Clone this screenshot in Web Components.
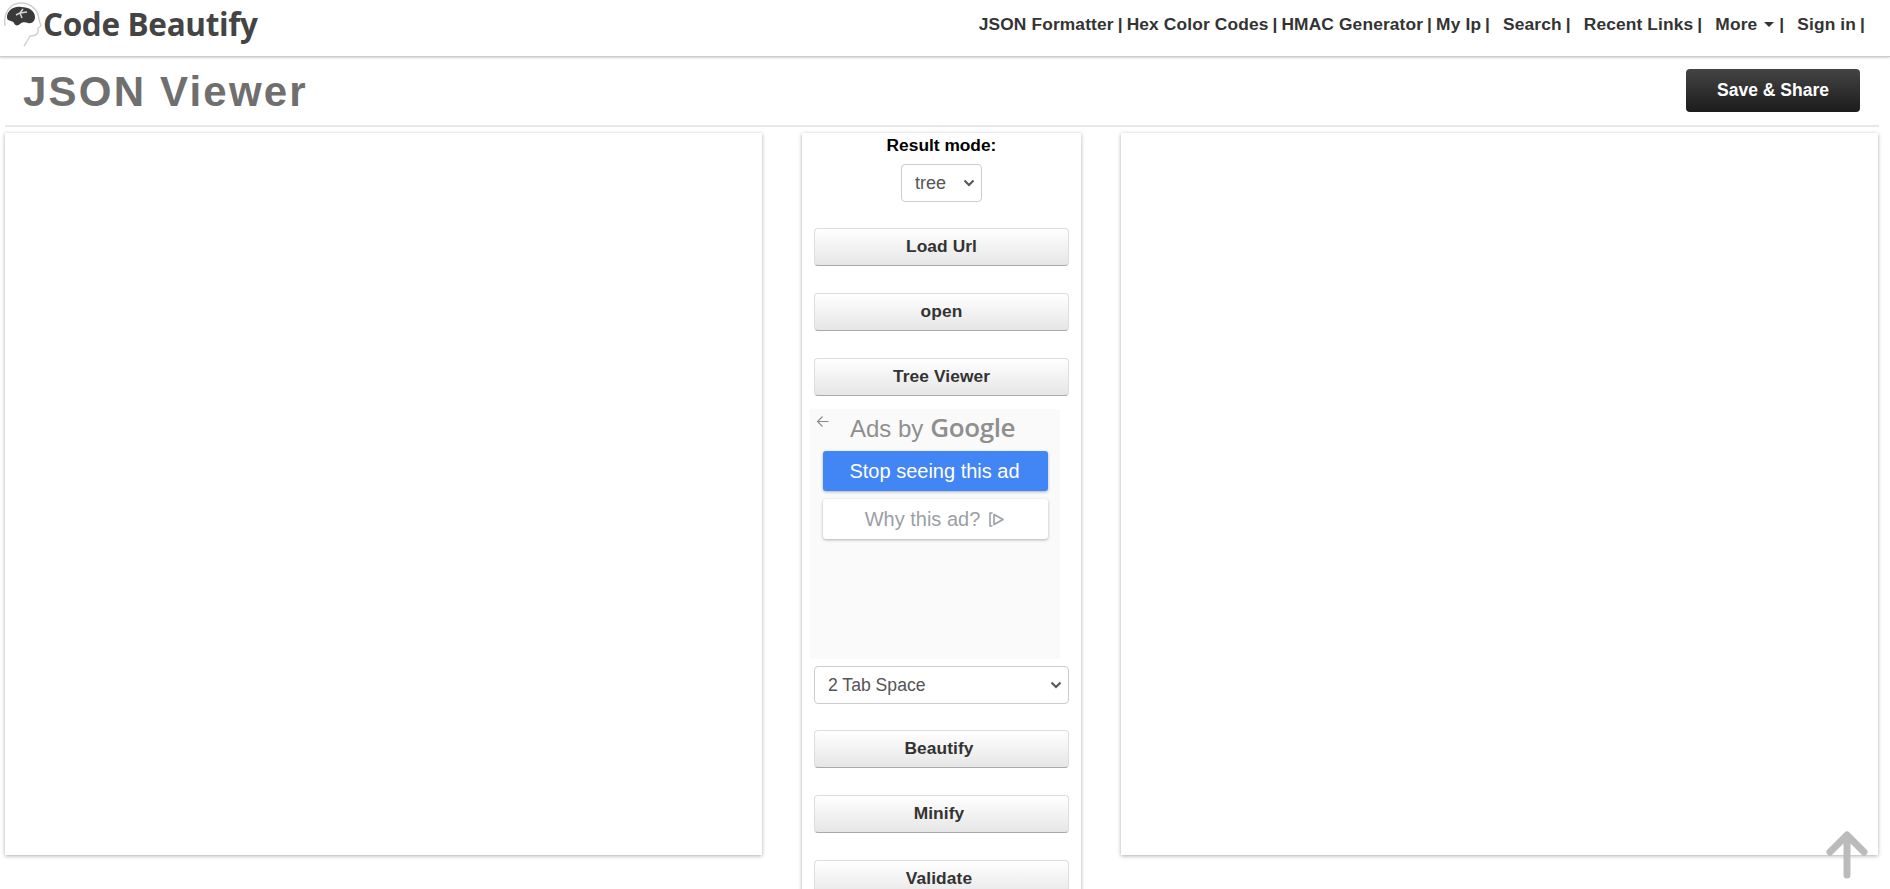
<!DOCTYPE html>
<html lang="en">
<head>
<meta charset="utf-8">
<title>JSON Viewer</title>
<style>
    html, body {
        margin: 0;
        height: 889px;
        overflow: hidden;
        background: #fff;
        font-family: "Liberation Sans", Arial, sans-serif;
    }
</style>
</head>
<body>
<code-header>
    <nav-item>JSON Formatter</nav-item>
    <nav-item>Hex Color Codes</nav-item>
    <nav-item>HMAC Generator</nav-item>
    <nav-item wide>My Ip</nav-item>
    <nav-item wide>Search</nav-item>
    <nav-item wide>Recent Links</nav-item>
    <nav-item wide caret>More</nav-item>
    <nav-item>Sign in</nav-item>
</code-header>
<title-bar heading="JSON Viewer"></title-bar>
<viewer-layout>
    <white-panel slot="left"></white-panel>
    <tool-column slot="middle">
        <mode-select></mode-select>
        <tool-button>Load Url</tool-button>
        <tool-button>open</tool-button>
        <tool-button>Tree Viewer</tool-button>
        <ad-box></ad-box>
        <tab-select></tab-select>
        <tool-button shifted>Beautify</tool-button>
        <tool-button shifted>Minify</tool-button>
        <tool-button shifted>Validate</tool-button>
    </tool-column>
    <white-panel slot="right"></white-panel>
</viewer-layout>
<scroll-top></scroll-top>

<script>
class CodeHeader extends HTMLElement {
    constructor() {
        super()
        this.attachShadow({ mode: "open" })
        this.shadowRoot.innerHTML = `
            <style>
                :host {
                    display: flex;
                    align-items: center;
                    justify-content: space-between;
                    height: 56px;
                    border-bottom: 1px solid #ccc;
                    box-shadow: 0 1px 2px rgba(0, 0, 0, .18);
                }
                .logo {
                    display: flex;
                    align-items: flex-start;
                    height: 56px;
                }
                svg {
                    display: block;
                    width: 43px;
                    height: 48px;
                }
                .name {
                    margin: 2px 0 0 0;
                    font: 700 31.5px "Open Sans", sans-serif;
                    letter-spacing: -.35px;
                    color: #444;
                }
                nav {
                    display: flex;
                    padding: 0 21px 0 0;
                    margin-top: -8px;
                }
            </style>
            <div class="logo">
                <svg viewBox="0 0 43 48">
                    <path d="M5 26C3 13 10 3 21 3C31 3 38 10 39 19C39 22 41 24 41 26L38 28L38 32C37 36 33 36 30 36C28 40 26 43 24 46"
                        fill="none" stroke="#cfcfcf" stroke-width="1.4"/>
                    <path d="M7 16C8 10 14 6 21 7C29 7 35 11 35 17C35 21 32 24 28 23C25 22 22 22 20 24C18 26 15 26 14 23C13 21 10 21 8 20C7 19 7 18 7 16Z" fill="#3a3a3a"/>
                    <path d="M16 15L20 13L23 9M20 13L27 12M20 13L22 18" fill="none" stroke="#d8d8d8" stroke-width="1.5"/>
                </svg>
                <span class="name">Code Beautify</span>
            </div>
            <nav><slot></slot></nav>
        `
    }
}

class NavItem extends HTMLElement {
    constructor() {
        super()
        this.attachShadow({ mode: "open" })
        const caret = this.hasAttribute("caret") ? `<i></i>` : ""
        this.shadowRoot.innerHTML = `<style>
                :host {
                    display: block;
                    font: 700 17.33px "Liberation Sans", sans-serif;
                    letter-spacing: .15px;
                    color: #333;
                    white-space: pre;
                }
                :host([wide]) {
                    margin-right: 9px;
                }
                span {
                    word-spacing: -1px;
                }
                i {
                    display: inline-block;
                    margin: 0 1px 3px 7px;
                    border: 5px solid transparent;
                    border-top-color: #333;
                    border-bottom: 0;
                }
            </style><slot></slot>${caret}<span> | </span>`
    }
}

class TitleBar extends HTMLElement {
    constructor() {
        super()
        this.attachShadow({ mode: "open" })
        this.shadowRoot.innerHTML = `
            <style>
                :host {
                    display: flex;
                    align-items: center;
                    justify-content: space-between;
                    height: 68px;
                    margin: 0 11px 0 5px;
                    padding: 0 19px 0 18px;
                    border-bottom: 2px solid #e8e8e8;
                }
                h1 {
                    margin: 2px 0 0;
                    font: 700 42px "Liberation Sans", sans-serif;
                    letter-spacing: 2.2px;
                    color: #6f6f6f;
                }
                button {
                    width: 174px;
                    height: 43px;
                    margin-top: -1px;
                    border: 0;
                    border-radius: 4px;
                    background: linear-gradient(#444, #1c1c1c);
                    color: #fff;
                    font: 700 17.5px "Liberation Sans", sans-serif;
                }
            </style>
            <h1>${this.getAttribute("heading")}</h1>
            <button>Save &amp; Share</button>
        `
    }
}

class ViewerLayout extends HTMLElement {
    constructor() {
        super()
        this.attachShadow({ mode: "open" })
        this.shadowRoot.innerHTML = `
            <style>
                :host {
                    display: grid;
                    grid-template-columns: 757px 279px 757px;
                    gap: 40px;
                    align-items: start;
                    padding: 6px 0 0 5px;
                }
            </style>
            <slot name="left"></slot>
            <slot name="middle"></slot>
            <slot name="right"></slot>
        `
    }
}

class WhitePanel extends HTMLElement {
    constructor() {
        super()
        this.attachShadow({ mode: "open" })
        this.shadowRoot.innerHTML = `
            <style>
                :host {
                    display: block;
                    height: 722px;
                    background: #fff;
                    box-shadow: 0 1px 4px rgba(0, 0, 0, .32);
                }
            </style>
        `
    }
}

class ToolColumn extends HTMLElement {
    constructor() {
        super()
        this.attachShadow({ mode: "open" })
        this.shadowRoot.innerHTML = `
            <style>
                :host {
                    display: flex;
                    flex-direction: column;
                    height: 860px;
                    padding: 0 12px;
                    box-sizing: border-box;
                    background: #fff;
                    box-shadow: 0 1px 4px rgba(0, 0, 0, .32);
                }
            </style>
            <slot></slot>
        `
    }
}

class ToolButton extends HTMLElement {
    constructor() {
        super()
        this.attachShadow({ mode: "open" })
        this.shadowRoot.innerHTML = `
            <style>
                :host {
                    display: block;
                    margin-bottom: 27px;
                }
                button {
                    display: block;
                    width: 100%;
                    height: 38px;
                    padding: 0 0 2px;
                    border: 1px solid #ddd;
                    border-bottom-color: #aaa;
                    border-radius: 4px;
                    background: linear-gradient(#fff, #e6e6e6);
                    color: #333;
                    font: 700 17.33px "Liberation Sans", sans-serif;
                    letter-spacing: .1px;
                }
                :host([shifted]) button {
                    padding-right: 5px;
                }
            </style>
            <button><slot></slot></button>
        `
    }
}

const selectStyle = `
    select {
        appearance: none;
        height: 38px;
        padding: 0 8px 0 13px;
        border: 1px solid #ccc;
        border-radius: 4px;
        background: #fff url("data:image/svg+xml,%3Csvg xmlns='http://www.w3.org/2000/svg' width='12' height='8'%3E%3Cpath d='M1.5 1.5L6 6L10.5 1.5' fill='none' stroke='%23555' stroke-width='2'/%3E%3C/svg%3E") no-repeat right 6px center;
        color: #555;
        font: 400 17.6px "Liberation Sans", sans-serif;
    }
`

class ModeSelect extends HTMLElement {
    constructor() {
        super()
        this.attachShadow({ mode: "open" })
        this.shadowRoot.innerHTML = `
            <style>
                :host {
                    display: flex;
                    flex-direction: column;
                    align-items: center;
                    margin-bottom: 26px;
                }
                label {
                    height: 31px;
                    padding-top: 2px;
                    box-sizing: border-box;
                    font: 700 17.33px "Liberation Sans", sans-serif;
                    color: #000;
                }
                ${selectStyle}
                select {
                    width: 81px;
                    font-size: 18px;
                }
            </style>
            <label for="mode">Result mode:</label>
            <select id="mode">
                <option>tree</option>
                <option>view</option>
                <option>form</option>
                <option>code</option>
                <option>text</option>
            </select>
        `
    }
}

class TabSelect extends HTMLElement {
    constructor() {
        super()
        this.attachShadow({ mode: "open" })
        this.shadowRoot.innerHTML = `
            <style>
                :host {
                    display: block;
                    margin-bottom: 26px;
                }
                ${selectStyle}
                select {
                    display: block;
                    width: 100%;
                }
            </style>
            <select>
                <option>2 Tab Space</option>
                <option>3 Tab Space</option>
                <option>4 Tab Space</option>
            </select>
        `
    }
}

class AdBox extends HTMLElement {
    constructor() {
        super()
        this.attachShadow({ mode: "open" })
        this.shadowRoot.innerHTML = `
            <style>
                :host {
                    display: block;
                    width: 250px;
                    height: 250px;
                    margin: -14px 0 7px -4px;
                    padding: 0 12px 0 13px;
                    box-sizing: border-box;
                    background: #fafafa;
                    position: relative;
                    font-family: "Liberation Sans", sans-serif;
                }
                .back {
                    position: absolute;
                    left: 6px;
                    top: 6px;
                    width: 13px;
                    height: 13px;
                }
                .by {
                    display: flex;
                    align-items: baseline;
                    justify-content: center;
                    height: 42px;
                    padding-right: 6px;
                    color: #8f8f8f;
                    font-size: 24px;
                    line-height: 40px;
                }
                .by b {
                    margin-left: 7px;
                    font: 600 26px "Open Sans", sans-serif;
                    letter-spacing: -.4px;
                }
                .btn {
                    display: flex;
                    align-items: center;
                    justify-content: center;
                    height: 40px;
                    border-radius: 3px;
                    font-size: 20px;
                    box-shadow: 0 1px 3px rgba(0, 0, 0, .3);
                }
                .stop {
                    background: #4285f4;
                    color: #fff;
                    margin-bottom: 8px;
                    padding-right: 2px;
                }
                .why {
                    background: #fff;
                    color: #9aa0a6;
                    gap: 9px;
                    padding-right: 2px;
                }
                .why svg {
                    width: 15px;
                    height: 15px;
                }
            </style>
            <svg class="back" viewBox="0 0 13 13">
                <path d="M12.5 6.5H1.5M6.5 1.5L1.5 6.5L6.5 11.5" fill="none" stroke="#888" stroke-width="1.1"/>
            </svg>
            <div class="by">Ads by<b>Google</b></div>
            <div class="btn stop">Stop seeing this ad</div>
            <div class="btn why">Why this ad?
                <svg viewBox="0 0 15 15">
                    <path d="M3.5 1H1V14H3.5M5 2.5L14 7.5L5 12.5Z" fill="none" stroke="#9aa0a6" stroke-width="1.6" stroke-linejoin="round"/>
                </svg>
            </div>
        `
    }
}

class ScrollTop extends HTMLElement {
    constructor() {
        super()
        this.attachShadow({ mode: "open" })
        this.shadowRoot.innerHTML = `
            <style>
                :host {
                    position: fixed;
                    left: 1824px;
                    top: 829px;
                    width: 46px;
                    height: 52px;
                }
                svg {
                    display: block;
                    width: 46px;
                    height: 52px;
                }
            </style>
            <svg viewBox="0 0 46 52">
                <path d="M23 6V46M6 23L23 6L40 23" fill="none" stroke="#bbb" stroke-width="7" stroke-linecap="round" stroke-linejoin="round"/>
            </svg>
        `
    }
}

customElements.define("code-header", CodeHeader)
customElements.define("nav-item", NavItem)
customElements.define("title-bar", TitleBar)
customElements.define("viewer-layout", ViewerLayout)
customElements.define("white-panel", WhitePanel)
customElements.define("tool-column", ToolColumn)
customElements.define("tool-button", ToolButton)
customElements.define("mode-select", ModeSelect)
customElements.define("tab-select", TabSelect)
customElements.define("ad-box", AdBox)
customElements.define("scroll-top", ScrollTop)
</script>
</body>
</html>
